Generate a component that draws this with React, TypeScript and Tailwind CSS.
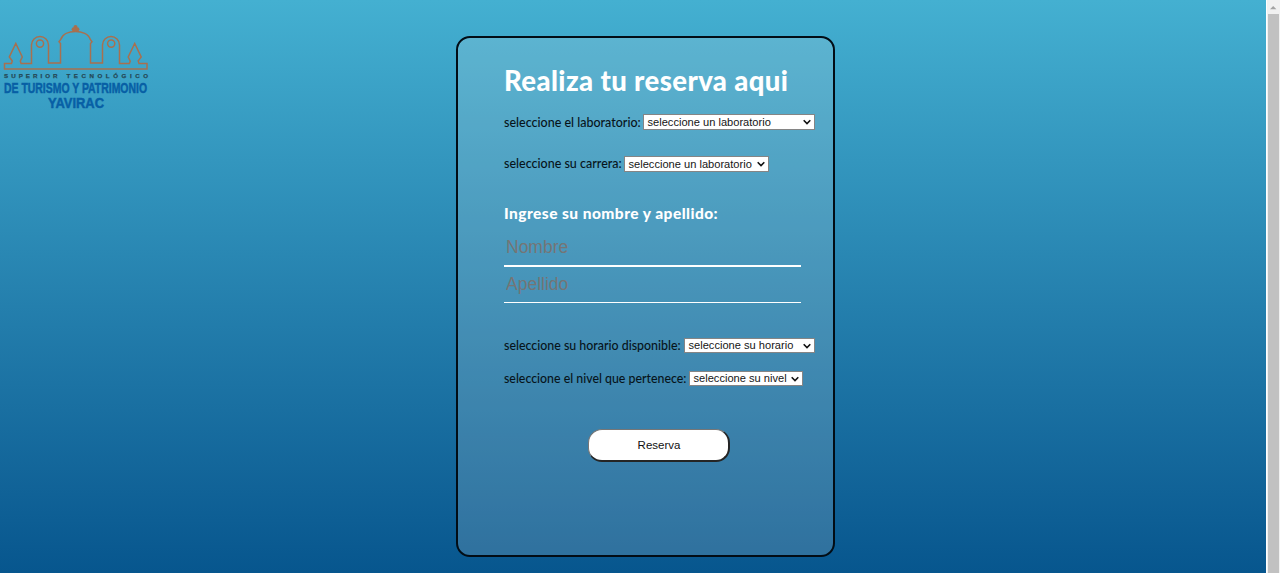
import React from 'react';

function Logo() {
  return (
    <svg className="block h-[88px] w-[152px] overflow-visible" viewBox="0 0 152 88" fill="none">
      <g stroke="#a8704f" strokeWidth="1.5">
        <path d="M4.500 45V39.500H11.500l.8-2.500-3-4 6.500-13.500 6.500 13.500-2 4 .8 2.500h10.400V21a8.500 8.500 0 0 1 17 0v18H60.500V19.500l-1.500-1.800 1.700-2.200C62.500 10 69 7.500 75.500 7.500S88.600 10 90.300 15.500l1.700 2.200-1.500 1.800V39h12V21a8.500 8.500 0 0 1 17 0v18.500h9.900l.8-2.500-2-4 6.500-13.500 6.500 13.500-3 4 .8 2.500h8V45z" />
        <circle cx="40" cy="19.600" r="3.600" />
        <circle cx="111.200" cy="19.600" r="3.600" />
      </g>
      <g fill="#a8704f">
        <circle cx="75.500" cy="3" r="2" />
        <circle cx="73.600" cy="5.300" r="2" />
        <circle cx="77.400" cy="5.300" r="2" />
        <path d="M75 4h1l1 4h-3z" />
      </g>
      <g fill="#254956" stroke="#254956" strokeWidth=".25" fontFamily="Liberation Sans, sans-serif" fontWeight="700" fontSize="6.200">
        <text x="4" y="54" textLength="53.500" lengthAdjust="spacing">SUPERIOR</text>
        <text x="66.500" y="54" textLength="81.500" lengthAdjust="spacing">TECNOLÓGICO</text>
      </g>
      <g fill="#075fa5" stroke="#075fa5" strokeWidth=".5" fontFamily="Liberation Sans, sans-serif" fontWeight="700" fontSize="15.200">
        <text x="4" y="68.800" textLength="143" lengthAdjust="spacingAndGlyphs">DE TURISMO Y PATRIMONIO</text>
        <text x="48" y="83.800" textLength="56" lengthAdjust="spacingAndGlyphs">YAVIRAC</text>
      </g>
    </svg>
  );
}

type SelectRowProps = {
  label: string;
  value: string;
  rowClass: string;
  labelClass: string;
  selectClass: string;
};

function SelectRow({ label, value, rowClass, labelClass, selectClass }: SelectRowProps) {
  return (
    <label className={`flex items-stretch ${rowClass}`}>
      <span className={`flex shrink-0 items-center whitespace-nowrap font-[Lato,sans-serif] leading-[14px] font-medium text-[#07141b] ${labelClass}`}>
        {label}
      </span>
      <span className={`flex shrink-0 items-center justify-between border border-[#858585] bg-white pr-[3px] pl-[3.500px] text-[#151515] ${selectClass}`}>
        <span className="whitespace-nowrap text-[11.100px] leading-[13px]">{value}</span>
        <svg className="h-2 w-2 shrink-0" viewBox="0 0 8 8" fill="none" stroke="#111" strokeWidth="1.600">
          <path d="M.7 2.300 4 5.600l3.300-3.300" />
        </svg>
      </span>
    </label>
  );
}

export default function App() {
  return (
    <div className="flex h-[573px] w-full overflow-hidden font-['Liberation_Sans',Arial,sans-serif]">
      <main className="flex min-w-0 flex-1 bg-linear-to-b from-[#44b0d1] to-[#07568e]">
        <div className="w-[456px] shrink-0 pt-[24px]">
          <Logo />
        </div>
        <form className="mt-9 flex h-[521px] w-[379px] shrink-0 flex-col rounded-[14px] border-2 border-[#020d16] bg-[#dde6e6]/18 pl-[46px]">
          <h1 className="mt-[25px] h-9 whitespace-nowrap font-[Lato,sans-serif] text-[27.500px] leading-9 font-black tracking-[0.400px] text-white">
            Realiza tu reserva aqui
          </h1>
          <SelectRow label="seleccione el laboratorio:" value="seleccione un laboratorio" rowClass="mt-[15px] h-4" labelClass="w-[139px] pt-px text-[12.500px]" selectClass="w-[172px]" />
          <SelectRow label="seleccione su carrera:" value="seleccione un laboratorio" rowClass="mt-[26px] h-4" labelClass="w-[120px] pb-px text-[12.500px]" selectClass="w-[145px]" />
          <h2 className="mt-[31px] h-5 whitespace-nowrap font-[Lato,sans-serif] text-[15.500px] leading-5 font-black tracking-[0.450px] text-white">
            Ingrese su nombre y apellido:
          </h2>
          <input className="mt-[7px] h-[37px] w-[297px] border-b-2 border-white px-0.5 text-[17.500px] outline-none placeholder:text-[#757575]" placeholder="Nombre" />
          <input className="h-[36px] w-[297px] border-b border-white px-0.5 text-[17.500px] outline-none placeholder:text-[#757575]" placeholder="Apellido" />
          <SelectRow label="seleccione su horario disponible:" value="seleccione su horario" rowClass="mt-[35px] h-[15px]" labelClass="w-[180px] text-[12.400px]" selectClass="w-[131px]" />
          <SelectRow label="seleccione el nivel que pertenece:" value="seleccione su nivel" rowClass="mt-[18px] h-[15px]" labelClass="w-[185px] text-[12.350px]" selectClass="w-[114px]" />
          <button type="button" className="mt-[43px] ml-[84px] h-[33px] w-[142px] rounded-[14px] border border-t-[#767676] border-r-2 border-r-[#252525] border-b-2 border-b-[#252525] border-l-[#767676] bg-white pt-px pl-px text-[11.500px] text-[#111]">
            Reserva
          </button>
        </form>
      </main>
      <div className="flex w-[14px] shrink-0 flex-col items-center border-l border-white bg-[#f1f1f1]">
        <svg className="h-[14px] w-[13px] shrink-0" viewBox="0 0 13 14">
          <path d="M3 9.200 6.200 6l3.200 3.200z" fill="#a3a3a3" />
        </svg>
        <div className="w-[11px] flex-1 bg-[#c1c1c1]" />
      </div>
    </div>
  );
}
